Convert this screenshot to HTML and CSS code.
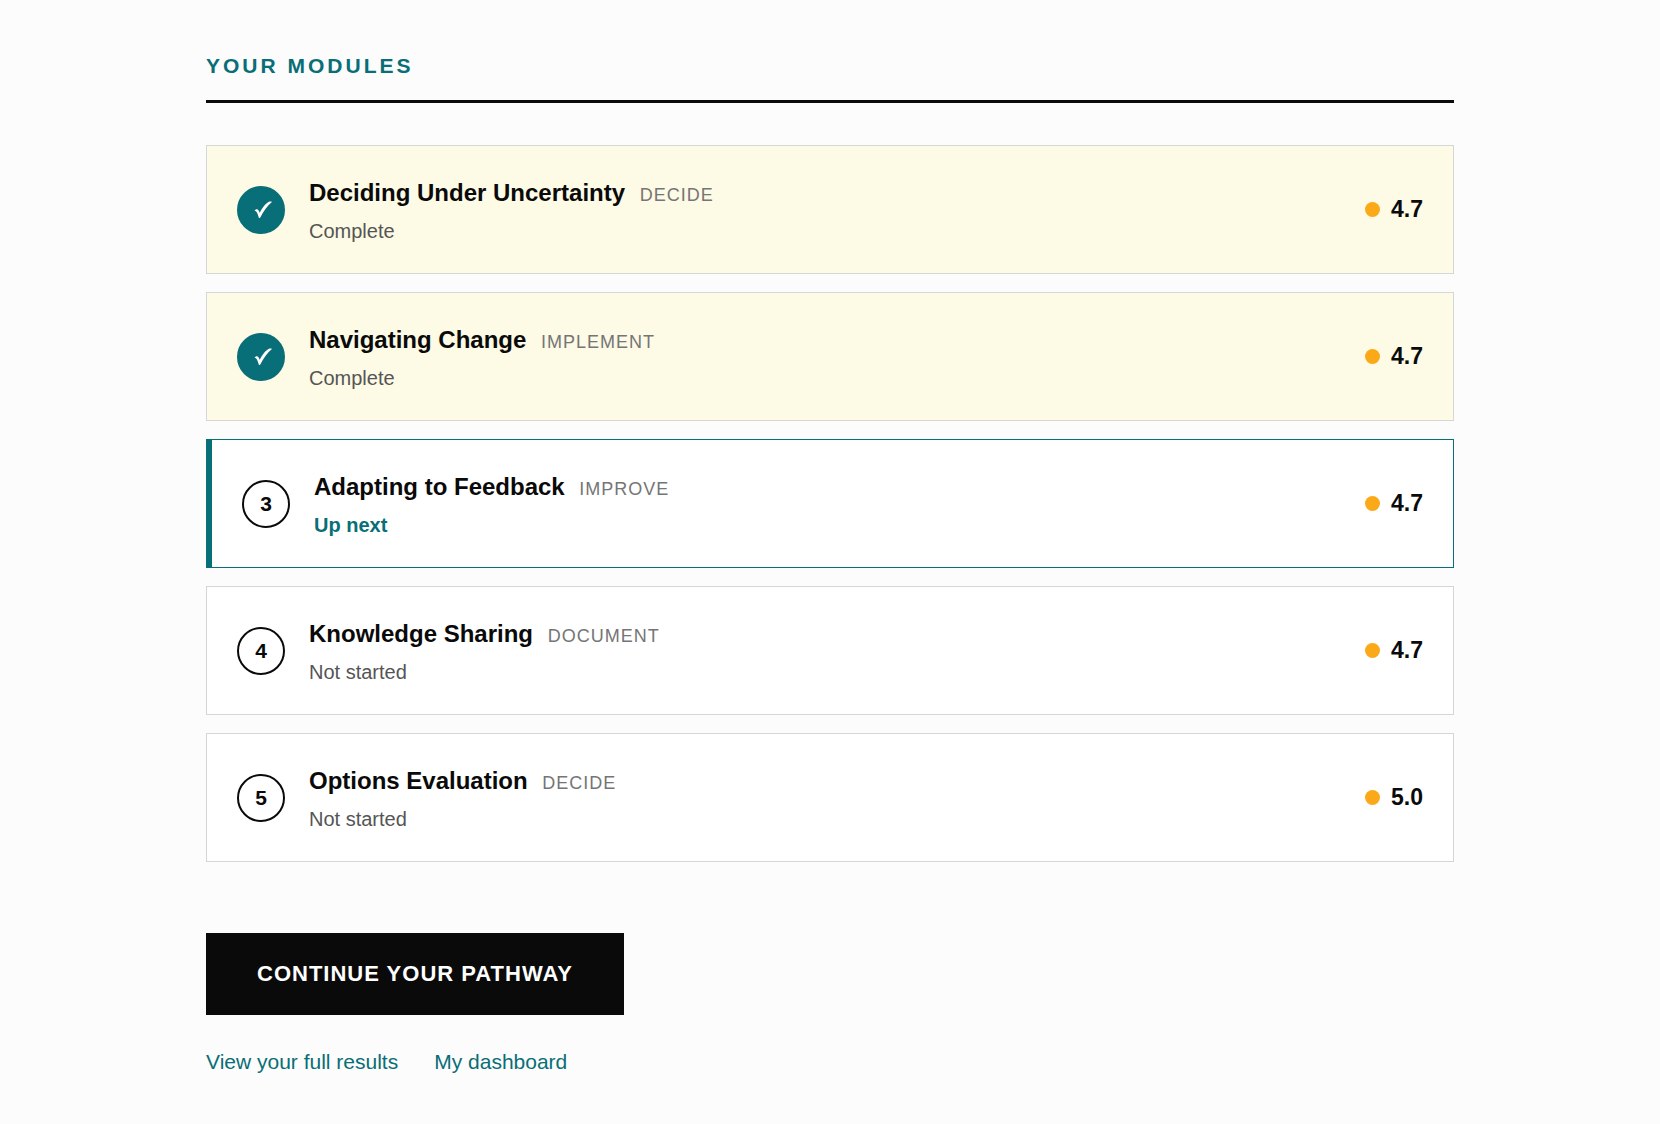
FILE: index.html
```html
<!DOCTYPE html>
<html lang="en">
<head>
    <meta charset="UTF-8">
    <meta name="viewport" content="width=device-width, initial-scale=1.0">
    <title>Your Modules</title>
    <link rel="stylesheet" href="styles.css">
</head>
<body>

<main class="pathway">
    <h2 class="section-title">Your Modules</h2>

    <ol class="modules">
        <li class="module complete">
            <span class="marker">
                <svg class="check" viewBox="0 0 18 18" aria-hidden="true"><path d="M.5 9.800C1.500 8.300 3.500 7.800 4.500 9.200L5.800 11.800C8 7 11.500 2.500 14.500 1 15.700.5 17.200.4 17.900 1 13 5 9.500 10.500 6.300 16.500L5 17.300C4.200 14.500 3.500 12 2.400 10.700 1.800 10.200 1.200 10 .5 9.800Z"/></svg>
            </span>
            <div class="info">
                <h3>Deciding Under Uncertainty <span class="tag">Decide</span></h3>
                <p class="status">Complete</p>
            </div>
            <span class="score">4.7</span>
        </li>
        <li class="module complete">
            <span class="marker">
                <svg class="check" viewBox="0 0 18 18" aria-hidden="true"><path d="M.5 9.800C1.500 8.300 3.500 7.800 4.500 9.200L5.800 11.800C8 7 11.500 2.500 14.500 1 15.700.5 17.200.4 17.900 1 13 5 9.500 10.500 6.300 16.500L5 17.300C4.200 14.500 3.500 12 2.400 10.700 1.800 10.200 1.200 10 .5 9.800Z"/></svg>
            </span>
            <div class="info">
                <h3>Navigating Change <span class="tag">Implement</span></h3>
                <p class="status">Complete</p>
            </div>
            <span class="score">4.7</span>
        </li>
        <li class="module next">
            <span class="marker">3</span>
            <div class="info">
                <h3>Adapting to Feedback <span class="tag">Improve</span></h3>
                <p class="status">Up next</p>
            </div>
            <span class="score">4.7</span>
        </li>
        <li class="module">
            <span class="marker">4</span>
            <div class="info">
                <h3>Knowledge Sharing <span class="tag">Document</span></h3>
                <p class="status">Not started</p>
            </div>
            <span class="score">4.7</span>
        </li>
        <li class="module">
            <span class="marker">5</span>
            <div class="info">
                <h3>Options Evaluation <span class="tag">Decide</span></h3>
                <p class="status">Not started</p>
            </div>
            <span class="score">5.0</span>
        </li>
    </ol>

    <a class="btn" href="#">Continue your pathway</a>

    <nav class="links">
        <a href="#">View your full results</a>
        <a href="#">My dashboard</a>
    </nav>
</main>

</body>
</html>
```
FILE: styles.css
```css
* {
    box-sizing: border-box;
    margin: 0;
    padding: 0;
}

body {
    background: #fcfcfc;
    color: #0a0a0a;
    font-family: "Liberation Sans", Arial, sans-serif;
}

.pathway {
    max-width: 1248px;
    margin: 0 auto;
    padding: 48px 0;
}

.section-title {
    padding-bottom: 16px;
    border-bottom: 3px solid #0a0a0a;
    margin-bottom: 42px;
    color: #086e77;
    font-size: 21px;
    line-height: 36px;
    letter-spacing: 3px;
    text-transform: uppercase;
}

.modules {
    display: flex;
    flex-direction: column;
    gap: 18px;
    margin-bottom: 71px;
    list-style: none;
}

.module {
    display: flex;
    align-items: center;
    gap: 24px;
    padding: 28px 30px;
    border: 1px solid #d6d6d6;
    background: #fff;
}

.module.complete {
    background: #fdfae6;
}

.module.next {
    border-color: #086e77;
    border-left-width: 6px;
}

.marker {
    display: flex;
    align-items: center;
    justify-content: center;
    width: 48px;
    height: 48px;
    flex-shrink: 0;
    border: 2px solid #0a0a0a;
    border-radius: 50%;
    font-size: 21px;
    font-weight: bold;
}

.complete .marker {
    border-color: #086e77;
    background: #086e77;
}

.check {
    width: 18px;
    height: 18px;
    margin-left: 3px;
    fill: #fff;
}

.info {
    flex: 1;
}

.info h3 {
    font-size: 24px;
    line-height: 38px;
}

.tag {
    margin-left: 8px;
    color: #757575;
    font-size: 18px;
    font-weight: normal;
    letter-spacing: 1px;
    text-transform: uppercase;
}

.status {
    margin-top: 3px;
    color: #555;
    font-size: 20px;
    line-height: 28px;
}

.next .status {
    color: #086e77;
    font-weight: bold;
}

.score {
    display: flex;
    align-items: center;
    gap: 11px;
    font-size: 23px;
    font-weight: bold;
}

.score::before {
    content: "";
    width: 15px;
    height: 15px;
    border-radius: 50%;
    background: #fba919;
}

.btn {
    display: inline-block;
    padding: 24px 51px;
    background: #0a0a0a;
    color: #fff;
    font-size: 22px;
    font-weight: bold;
    line-height: 34px;
    letter-spacing: 1px;
    text-decoration: none;
    text-transform: uppercase;
}

.links {
    display: flex;
    flex-wrap: wrap;
    gap: 36px;
    margin-top: 30px;
}

.links a {
    color: #086e77;
    font-size: 21px;
    line-height: 34px;
    text-decoration: none;
}
```
